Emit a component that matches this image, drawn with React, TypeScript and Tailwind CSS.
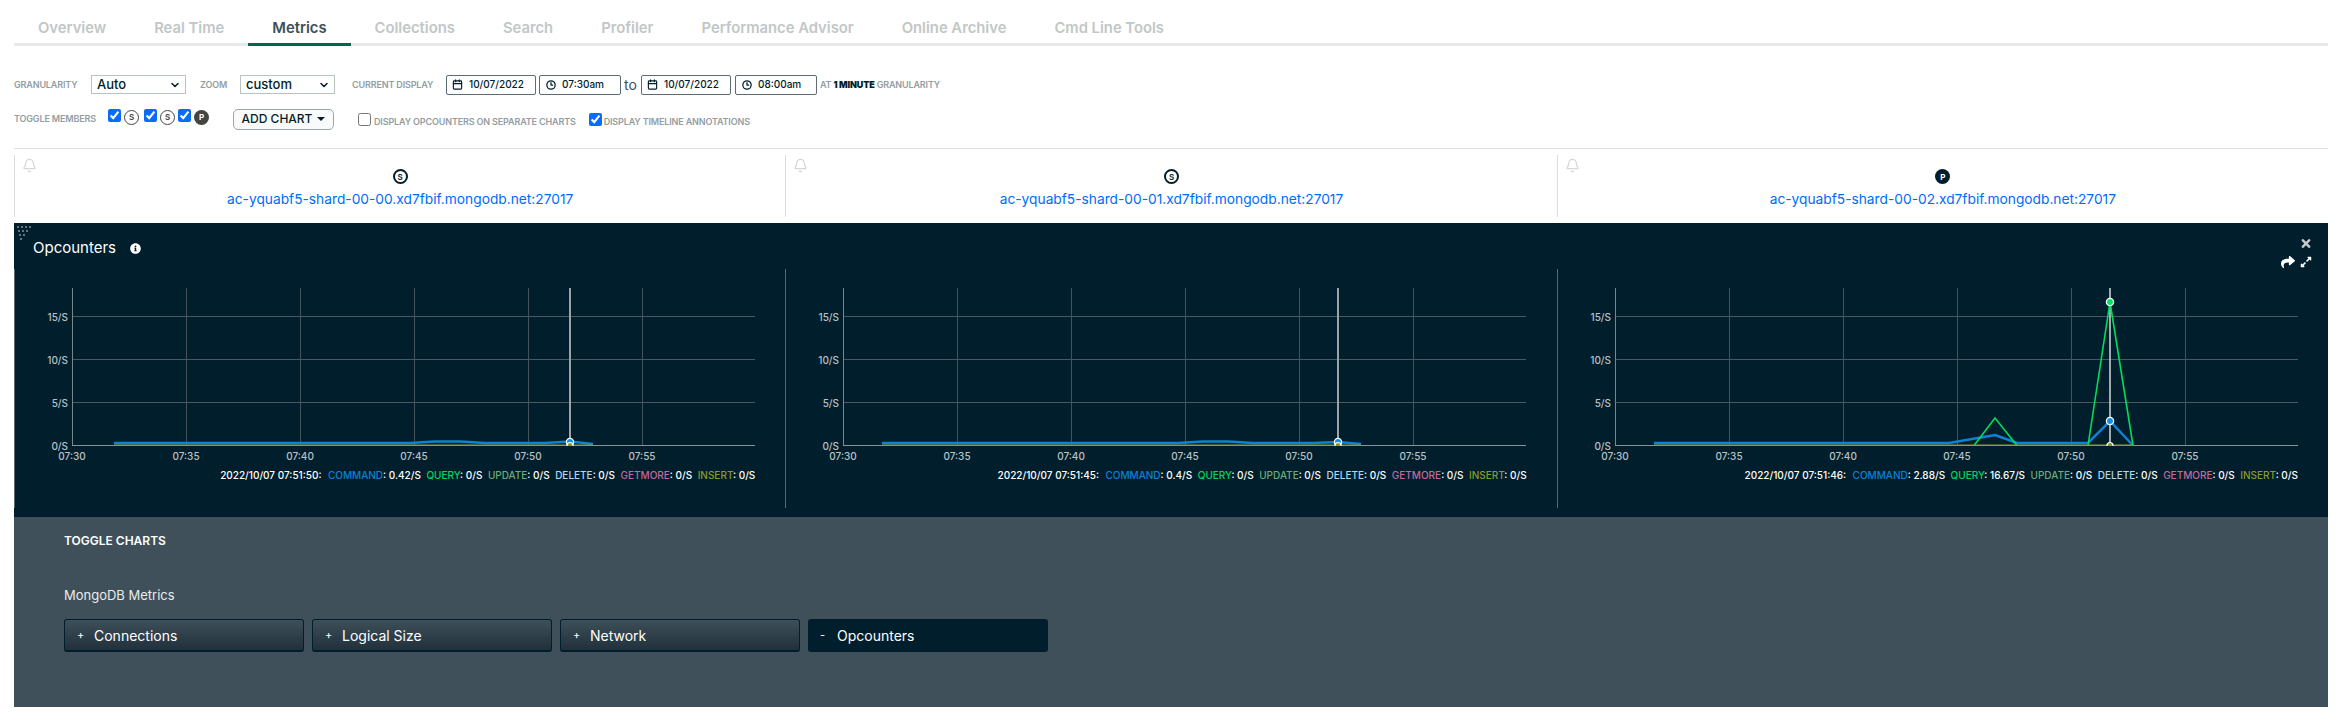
import { Bell, Calendar, ChevronDown, Clock3 } from "lucide-react";
import { FaExpandAlt, FaInfoCircle, FaShare, FaTimes } from "react-icons/fa";

type Legend = { command: string; query: string };

type Chart = {
  host: string;
  role: "S" | "P";
  time: string;
  legend: Legend;
  cursor: number;
  blue: string;
  green?: string[];
  dataStart: number;
  dataEnd: number;
  markers: { y: number; color: string }[];
  thickCursor: boolean;
};

const TABS = ["Overview", "Real Time", "Metrics", "Collections", "Search", "Profiler", "Performance Advisor", "Online Archive", "Cmd Line Tools"];
const BASE = 176.5;
const GRID_Y = [47, 90, 133];
const GRID_X = [171, 285, 399, 513, 627];
const TICKS = ["07:35", "07:40", "07:45", "07:50", "07:55"];

const CHARTS: Chart[] = [
  {
    host: "ac-yquabf5-shard-00-00.xd7fbif.mongodb.net:27017",
    role: "S",
    time: "2022/10/07 07:51:50:",
    legend: { command: "0.42/S", query: "0/S" },
    cursor: 555,
    blue: "99,174 395,174 420,172.5 445,172.5 470,174 530,174 555,172.5 578,175",
    dataStart: 99,
    dataEnd: 578,
    markers: [{ y: 173, color: "#0d8fe6" }],
    thickCursor: true,
  },
  {
    host: "ac-yquabf5-shard-00-01.xd7fbif.mongodb.net:27017",
    role: "S",
    time: "2022/10/07 07:51:45:",
    legend: { command: "0.4/S", query: "0/S" },
    cursor: 552,
    blue: "96,174 392,174 417,172.5 442,172.5 467,174 527,174 552,173 575,175",
    dataStart: 96,
    dataEnd: 575,
    markers: [{ y: 173, color: "#0d8fe6" }],
    thickCursor: true,
  },
  {
    host: "ac-yquabf5-shard-00-02.xd7fbif.mongodb.net:27017",
    role: "P",
    time: "2022/10/07 07:51:46:",
    legend: { command: "2.88/S", query: "16.67/S" },
    cursor: 552,
    blue: "96,174 391,174 437,166 459,174 530,174 552,152 575,176.5",
    green: ["416,176.5 437,149 459,176.5", "530,176.5 552,33 575,176.5"],
    dataStart: 96,
    dataEnd: 575,
    markers: [
      { y: 33, color: "#00e25f" },
      { y: 152, color: "#0d8fe6" },
    ],
    thickCursor: false,
  },
];

function Label({ children, className = "" }: { children: React.ReactNode; className?: string }) {
  return <span className={`text-[9px] font-semibold tracking-[-0.15px] text-[#939da2] ${className}`}>{children}</span>;
}

function SelectBox({ value, width }: { value: string; width: string }) {
  return (
    <div className={`flex h-[19px] items-center justify-between border border-[#b8c4c2] bg-white pl-[5px] pr-[4px] text-[13px] font-medium text-[#001e2b] ${width}`}>
      {value}
      <ChevronDown size={12} strokeWidth={3} />
    </div>
  );
}

function DateBox({ value, clock, width }: { value: string; clock?: boolean; width: string }) {
  return (
    <div className={`flex h-[20px] items-center rounded-[2px] border border-[#5c6c75] pl-[5px] text-[10px] font-medium text-[#001e2b] ${width}`}>
      {clock ? <Clock3 size={10} strokeWidth={3} className="ml-[1px] mr-[6px]" /> : <Calendar size={11} strokeWidth={2.5} className="mr-[6px]" />}
      {value}
    </div>
  );
}

function RoleBadge({ role, strong }: { role: "S" | "P"; strong?: boolean }) {
  if (role === "P") {
    return (
      <span className={`flex h-[15px] w-[15px] items-center justify-center rounded-full text-[8px] font-bold text-white ${strong ? "bg-[#001e2b]" : "bg-[#444]"}`}>
        P
      </span>
    );
  }
  return (
    <span
      className={`flex h-[15px] w-[15px] items-center justify-center rounded-full text-[8px] font-semibold ${
        strong ? "border-2 border-[#001e2b] text-[#001e2b]" : "border-[1.5px] border-[#444] text-[#444]"
      }`}
    >
      S
    </span>
  );
}

function Check({ checked, className = "" }: { checked: boolean; className?: string }) {
  return <input type="checkbox" readOnly checked={checked} className={`m-0 h-[13px] w-[13px] accent-[#0a6cff] ${className}`} />;
}

function Grip() {
  const dots: [number, number][] = [];
  for (let row = 0; row < 4; row++) {
    for (let col = 0; col < 4 - row; col++) dots.push([col * 4 + row, row * 4]);
  }
  return (
    <svg width="16" height="16" className="absolute left-[3px] top-[3px]">
      {dots.map(([x, y]) => (
        <rect key={`${x}-${y}`} x={x} y={y} width="2" height="2" fill="#66757d" />
      ))}
    </svg>
  );
}

function ChartPlot({ chart, id }: { chart: Chart; id: number }) {
  const clip = `plot-${id}`;
  return (
    <svg width="771" height="195" className="block">
      <defs>
        <clipPath id={clip}>
          <rect x="0" y="0" width="771" height={BASE + 0.5} />
        </clipPath>
      </defs>
      {GRID_Y.map((y) => (
        <line key={y} x1="57" x2="740" y1={y + 0.5} y2={y + 0.5} stroke="#4b585f" />
      ))}
      {GRID_X.map((x) => (
        <line key={x} x1={x + 0.5} x2={x + 0.5} y1="19" y2={BASE} stroke="#45525a" />
      ))}
      <line x1="57.5" x2="57.5" y1="19" y2={BASE} stroke="#7b868c" />
      <line x1="57" x2="740" y1={BASE} y2={BASE} stroke="#8a9398" />
      <line x1={chart.cursor} x2={chart.cursor} y1="19" y2={BASE} stroke={chart.thickCursor ? "#9aa3a8" : "#d5d9db"} strokeWidth={chart.thickCursor ? 2 : 1.5} />
      <polyline points={chart.blue} fill="none" stroke="#0d82d6" strokeWidth="2.5" />
      {chart.green?.map((points) => (
        <polyline key={points} points={points} fill="none" stroke="#00dd5d" strokeWidth="1.6" />
      ))}
      <line x1={chart.dataStart} x2={chart.dataEnd} y1={BASE - 0.5} y2={BASE - 0.5} stroke="#8a9b2e" strokeWidth="1" />
      <g clipPath={`url(#${clip})`}>
        {chart.markers.map((m) => (
          <circle key={m.y} cx={chart.cursor} cy={m.y} r="3.6" fill={m.color} stroke="#fff" strokeWidth="1.3" />
        ))}
        <circle cx={chart.cursor} cy={BASE} r="3" fill="#8a9b2e" stroke="#fff" strokeWidth="1.2" />
      </g>
      <g fill="#b9c1c5" fontSize="10" fontWeight="500">
        <text x="53" y="51.5" textAnchor="end">15/S</text>
        <text x="53" y="94.5" textAnchor="end">10/S</text>
        <text x="53" y="137.5" textAnchor="end">5/S</text>
        <text x="53" y="181" textAnchor="end">0/S</text>
        <text x="57" y="191" textAnchor="middle">07:30</text>
        {TICKS.map((t, i) => (
          <text key={t} x={GRID_X[i]} y="191" textAnchor="middle">{t}</text>
        ))}
      </g>
    </svg>
  );
}

function LegendRow({ chart }: { chart: Chart }) {
  return (
    <div className="flex justify-end gap-[5.5px] pr-[30px] pt-[1px] text-[10px] font-medium leading-[20px] text-white">
      <span className="mr-[1px]">{chart.time}</span>
      <span><span className="text-[#0d82d6]">COMMAND</span>: {chart.legend.command}</span>
      <span><span className="text-[#00d660]">QUERY</span>: {chart.legend.query}</span>
      <span><span className="text-[#6cac78]">UPDATE</span>: 0/S</span>
      <span><span className="text-[#b2d8f0]">DELETE</span>: 0/S</span>
      <span><span className="text-[#c9689e]">GETMORE</span>: 0/S</span>
      <span><span className="text-[#8a9b2e]">INSERT</span>: 0/S</span>
    </div>
  );
}

function ToggleButton({ label, active }: { label: string; active?: boolean }) {
  return (
    <button
      type="button"
      className={`flex h-[33px] w-[240px] items-center rounded-[3px] pl-[12px] text-[14px] text-white ${
        active
          ? "bg-[#001e2b]"
          : "border-x border-t border-b-2 border-[#001e2b] bg-gradient-to-b from-[#3d4f58] to-[#21313c]"
      }`}
    >
      <span className="mr-[12px] w-[5px] text-[11px]">{active ? "-" : "+"}</span>
      {label}
    </button>
  );
}

export default function App() {
  return (
    <div className="mx-[14px] h-[717px] bg-white pb-[10px] font-['Inter',sans-serif]">
      <nav className="flex h-[46px] border-b-[3px] border-[#e8eaea]">
        {TABS.map((tab) => (
          <div
            key={tab}
            className={`-mb-[3px] flex h-[46px] items-center border-b-[3px] px-[24px] pt-[13px] text-[14.8px] font-semibold ${
              tab === "Metrics" ? "border-[#00684a] text-[#3d4f58]" : "border-transparent text-[#c1c7c6]"
            }`}
          >
            {tab}
          </div>
        ))}
      </nav>

      <div className="mt-[28px] flex h-[21px] items-center">
        <Label className="w-[77px]">GRANULARITY</Label>
        <SelectBox value="Auto" width="w-[95px]" />
        <Label className="ml-[14px] w-[40px]">ZOOM</Label>
        <SelectBox value="custom" width="w-[95px]" />
        <Label className="ml-[17px] w-[94px]">CURRENT DISPLAY</Label>
        <DateBox value="10/07/2022" width="w-[90px]" />
        <div className="w-[3px]" />
        <DateBox value="07:30am" clock width="w-[82px]" />
        <span className="mx-[3px] w-[14px] text-[14px] text-[#3d4f58]">to</span>
        <DateBox value="10/07/2022" width="w-[90px]" />
        <div className="w-[4px]" />
        <DateBox value="08:00am" clock width="w-[82px]" />
        <Label className="ml-[3px]">AT <b className="text-[#001e2b]">1 MINUTE</b> GRANULARITY</Label>
      </div>

      <div className="mt-[13px] flex h-[22px] items-center">
        <Label className="w-[94px]">TOGGLE MEMBERS</Label>
        <div className="-mt-[4px] flex items-center gap-[3px]">
          <Check checked className="-mt-[3px]" />
          <RoleBadge role="S" />
          <Check checked className="ml-[2px] -mt-[3px]" />
          <RoleBadge role="S" />
          <Check checked className="-mt-[3px]" />
          <RoleBadge role="P" />
        </div>
        <button
          type="button"
          className="ml-[24px] flex h-[21px] w-[101px] items-center justify-center rounded-[5px] border border-[#9aa6aa] bg-[#f9fbfa] text-[12px] font-medium text-[#001e2b]"
        >
          ADD CHART
          <span className="ml-[5px] h-0 w-0 border-x-[4px] border-t-[4px] border-x-transparent border-t-[#001e2b]" />
        </button>
        <Check checked={false} className="ml-[24px]" />
        <Label className="ml-[3px] mt-[5px]">DISPLAY OPCOUNTERS ON SEPARATE CHARTS</Label>
        <Check checked className="ml-[13px]" />
        <Label className="ml-[2px] mt-[5px]">DISPLAY TIMELINE ANNOTATIONS</Label>
      </div>

      <div className="mt-[18px] border-t border-[#dcdfdf]" />

      <div className="mt-[6px] grid h-[62px] grid-cols-3">
        {CHARTS.map((chart) => (
          <div key={chart.host} className="relative flex flex-col items-center border-l border-[#dcdfdf] pt-[14px]">
            <Bell size={15} className="absolute left-[7px] top-[3px] text-[#d4d8d8]" />
            <RoleBadge role={chart.role} strong />
            <a href="#" className="mt-[5px] text-[13.75px] leading-[20px] text-[#016bf8]">
              {chart.host}
            </a>
          </div>
        ))}
      </div>

      <section className="relative mt-[6px] h-[294px] bg-[#001e2b] text-white">
        <Grip />
        <header className="flex h-[46px] justify-between">
          <div className="flex items-center gap-[14px] pl-[19px] pt-[4px]">
            <h2 className="text-[15px] font-normal">Opcounters</h2>
            <FaInfoCircle size={11} />
          </div>
          <div className="flex flex-col items-end pr-[16px] pt-[14px]">
            <FaTimes size={16} className="mr-[-2px] text-[#c5cbce]" />
            <div className="mt-[5px] flex items-center gap-[5px]">
              <FaShare size={14} />
              <FaExpandAlt size={12} />
            </div>
          </div>
        </header>
        <div className="grid h-[239px] grid-cols-3">
          {CHARTS.map((chart, i) => (
            <div key={chart.host} className="border-l border-[#5a6870]">
              <ChartPlot chart={chart} id={i} />
              <LegendRow chart={chart} />
            </div>
          ))}
        </div>
      </section>

      <section className="h-[190px] bg-[#3f505a] pl-[50px] text-white">
        <h3 className="pt-[18px] text-[12px] font-semibold leading-[12px]">TOGGLE CHARTS</h3>
        <p className="mt-[40px] text-[13px] leading-[16px] text-[#e8edeb]">MongoDB Metrics</p>
        <div className="mt-[16px] flex gap-[8px]">
          <ToggleButton label="Connections" />
          <ToggleButton label="Logical Size" />
          <ToggleButton label="Network" />
          <ToggleButton label="Opcounters" active />
        </div>
      </section>
    </div>
  );
}
